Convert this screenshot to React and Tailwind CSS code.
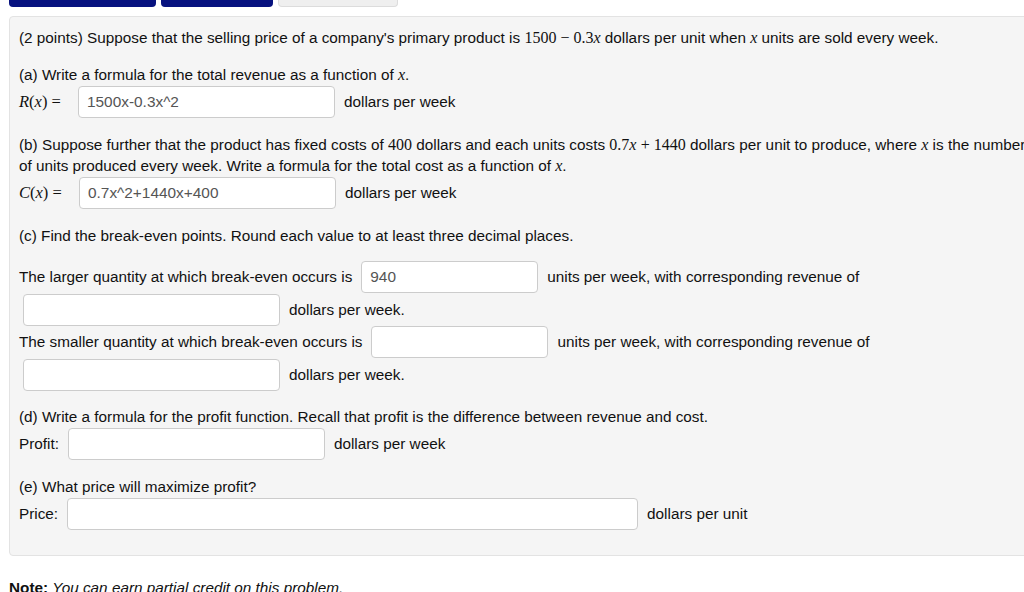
import React from "react";

const M = ({ children }) => (
  <span className="font-['Liberation_Serif',serif] text-[16px] leading-none">{children}</span>
);
const V = ({ children = "x" }) => (
  <i className="font-['Liberation_Serif',serif] text-[16px] leading-none">{children}</i>
);

const Field = ({ value = "", width = "w-[257px]" }) => (
  <input
    type="text"
    defaultValue={value}
    className={`${width} h-[32px] bg-white border border-[#cccccc] rounded-[4px] px-[8px] text-[15.4px] text-[#555] outline-0 shrink-0`}
  />
);

const Row = ({ className = "", children }) => (
  <div className={`flex items-center h-[32px] ${className}`}>{children}</div>
);

export default function App() {
  return (
    <div className="w-[1024px] h-[592px] overflow-hidden bg-white font-['Liberation_Sans',Arial,sans-serif] text-[15.3px] text-[#111] leading-[20px]">
      <div className="flex gap-[5px] pl-[9px]">
        <div className="w-[147px] h-[7px] bg-[#07127f] rounded-b-[4px]" />
        <div className="w-[112px] h-[7px] bg-[#07127f] rounded-b-[4px]" />
        <div className="w-[120px] h-[7px] bg-[#efefef] border border-t-0 border-[#dcdcdc] rounded-b-[4px]" />
      </div>

      <div className="ml-[9px] mt-[9px] w-[1120px] bg-[#f5f5f5] border border-[#e3e3e3] rounded-[4px] pt-[11px] pb-[25px] pl-[9px]">
        <p className="whitespace-nowrap">
          (2 points) Suppose that the selling price of a company's primary product is{" "}
          <M>1500 − 0.3</M><V /> dollars per unit when <V /> units are sold every week.
        </p>

        <p className="mt-[17px]">
          (a) Write a formula for the total revenue as a function of <V />.
        </p>
        <Row className="mt-[1px]">
          <span className="w-[59px] font-['Liberation_Serif',serif] text-[16.5px]">
            <i>R</i>(<i>x</i>) =
          </span>
          <Field value="1500x-0.3x^2" />
          <span className="ml-[9px]">dollars per week</span>
        </Row>

        <p className="mt-[16px] leading-[21px] whitespace-nowrap">
          (b) Suppose further that the product has fixed costs of <M>400</M> dollars and each units costs{" "}
          <M>0.7</M><V /> <M>+ 1440</M> dollars per unit to produce, where <V /> is the number
          <br />
          of units produced every week. Write a formula for the total cost as a function of <V />.
        </p>
        <Row className="mt-[1px]">
          <span className="w-[60px] font-['Liberation_Serif',serif] text-[16.5px]">
            <i>C</i>(<i>x</i>) =
          </span>
          <Field value="0.7x^2+1440x+400" />
          <span className="ml-[9px]">dollars per week</span>
        </Row>

        <p className="mt-[17px]">
          (c) Find the break-even points. Round each value to at least three decimal places.
        </p>
        <Row className="mt-[15px]">
          <span className="mr-[9px]">The larger quantity at which break-even occurs is</span>
          <Field value="940" width="w-[177px]" />
          <span className="ml-[9px]">units per week, with corresponding revenue of</span>
        </Row>
        <Row className="mt-[1px] pl-[4px]">
          <Field />
          <span className="ml-[9px]">dollars per week.</span>
        </Row>
        <Row>
          <span className="mr-[9px]">The smaller quantity at which break-even occurs is</span>
          <Field width="w-[177px]" />
          <span className="ml-[9px]">units per week, with corresponding revenue of</span>
        </Row>
        <Row className="mt-[1px] pl-[4px]">
          <Field />
          <span className="ml-[9px]">dollars per week.</span>
        </Row>

        <p className="mt-[16px]">
          (d) Write a formula for the profit function. Recall that profit is the difference between revenue and cost.
        </p>
        <Row className="mt-[1px]">
          <span className="mr-[9px]">Profit:</span>
          <Field />
          <span className="ml-[9px]">dollars per week</span>
        </Row>

        <p className="mt-[17px]">(e) What price will maximize profit?</p>
        <Row className="mt-[1px]">
          <span className="mr-[9px]">Price:</span>
          <Field width="w-[571px]" />
          <span className="ml-[9px]">dollars per unit</span>
        </Row>
      </div>

      <p className="ml-[9px] mt-[22px]">
        <b>Note:</b> <i>You can earn partial credit on this problem.</i>
      </p>
    </div>
  );
}
